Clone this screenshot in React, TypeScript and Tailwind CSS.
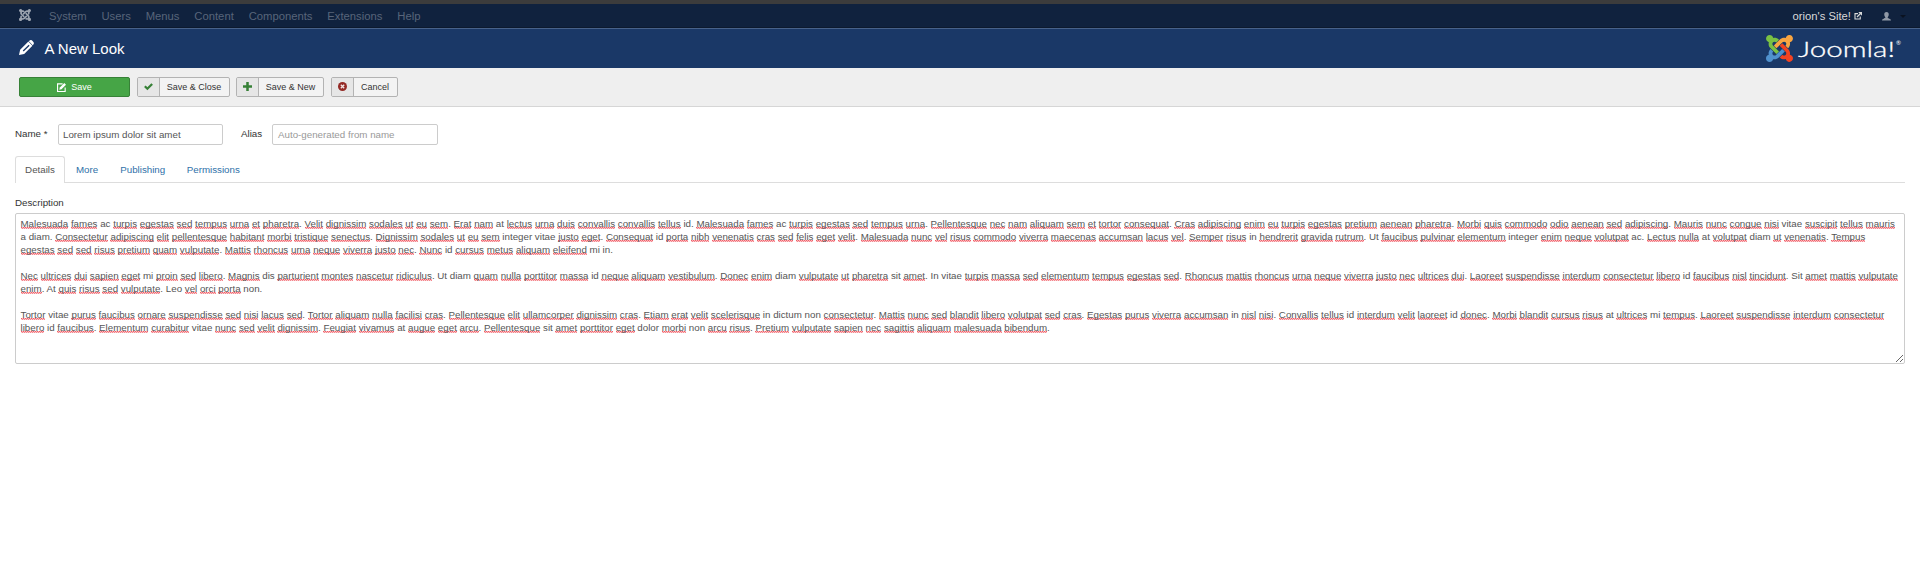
import React from "react";

const lines = [
  "*Malesuada *fames ac *turpis *egestas *sed *tempus *urna *et *pharetra. *Velit *dignissim *sodales *ut *eu *sem. *Erat *nam at *lectus *urna *duis *convallis *convallis *tellus id. *Malesuada *fames ac *turpis *egestas *sed *tempus *urna. *Pellentesque *nec *nam *aliquam *sem *et *tortor *consequat. *Cras *adipiscing *enim *eu *turpis *egestas *pretium *aenean *pharetra. *Morbi *quis *commodo *odio *aenean *sed *adipiscing. *Mauris *nunc *congue *nisi vitae *suscipit *tellus *mauris",
  "a diam. *Consectetur *adipiscing *elit *pellentesque *habitant *morbi *tristique *senectus. *Dignissim *sodales *ut *eu *sem integer vitae *justo *eget. *Consequat id *porta *nibh *venenatis *cras *sed *felis *eget *velit. *Malesuada *nunc *vel *risus *commodo *viverra *maecenas *accumsan *lacus *vel. *Semper *risus in *hendrerit *gravida *rutrum. Ut *faucibus *pulvinar *elementum integer *enim *neque *volutpat ac. *Lectus *nulla at *volutpat diam *ut *venenatis. *Tempus",
  "*egestas *sed *sed *risus *pretium *quam *vulputate. *Mattis *rhoncus *urna *neque *viverra *justo *nec. *Nunc id *cursus *metus *aliquam *eleifend mi in.",
  "",
  "*Nec *ultrices *dui *sapien *eget mi *proin *sed *libero. *Magnis dis *parturient *montes *nascetur *ridiculus. Ut diam *quam *nulla *porttitor *massa id *neque *aliquam *vestibulum. *Donec *enim diam *vulputate *ut *pharetra sit *amet. In vitae *turpis *massa *sed *elementum *tempus *egestas *sed. *Rhoncus *mattis *rhoncus *urna *neque *viverra *justo *nec *ultrices *dui. *Laoreet *suspendisse *interdum *consectetur *libero id *faucibus *nisl *tincidunt. Sit *amet *mattis *vulputate",
  "*enim. At *quis *risus *sed *vulputate. Leo *vel *orci *porta non.",
  "",
  "*Tortor vitae *purus *faucibus *ornare *suspendisse *sed *nisi *lacus *sed. *Tortor *aliquam *nulla *facilisi *cras. *Pellentesque *elit *ullamcorper *dignissim *cras. *Etiam *erat *velit *scelerisque in dictum non *consectetur. *Mattis *nunc *sed *blandit *libero *volutpat *sed *cras. *Egestas *purus *viverra *accumsan in *nisl *nisi. *Convallis *tellus id *interdum *velit *laoreet id *donec. *Morbi *blandit *cursus *risus at *ultrices mi *tempus. *Laoreet *suspendisse *interdum *consectetur",
  "*libero id *faucibus. *Elementum *curabitur vitae *nunc *sed *velit *dignissim. *Feugiat *vivamus at *augue *eget *arcu. *Pellentesque sit *amet *porttitor *eget dolor *morbi non *arcu *risus. *Pretium *vulputate *sapien *nec *sagittis *aliquam *malesuada *bibendum.",
];

// A leading asterisk marks a word flagged by the spell checker.
function Word({ token }: { token: string }) {
  const m = token.match(/^\*([a-z]+)(.*)$/i);
  if (!m) return <>{token}</>;
  return (
    <>
      <span className="bg-[linear-gradient(90deg,#f0606a_50%,#f9b5b9_50%),linear-gradient(90deg,#fbd0d2_50%,#f4868d_50%)] bg-[length:2px_1px,2px_1px] bg-[position:0_9px,0_10px] bg-repeat-x">{m[1]}</span>
      {m[2]}
    </>
  );
}

function Line({ text }: { text: string }) {
  return (
    <div className="h-[13px] whitespace-nowrap leading-[13px] [word-spacing:-0.008px]">
      {text.split(" ").map((t, i) => (
        <React.Fragment key={i}>
          {i > 0 ? " " : ""}
          <Word token={t} />
        </React.Fragment>
      ))}
    </div>
  );
}

const markPaths = [
  "M.6 92.1C.6 58.8 27.4 32 60.4 32c30 0 54.5 21.9 59.2 50.2 32.6-7.6 67.1.6 96.5 30l-44.3 44.3c-20.5-20.5-42.6-16.3-55.4-3.5-14.3 14.3-14.3 37.9 0 52.2l99.5 99.5-44 44.3c-87.700-87.200-49.700-49.700-99.800-99.700-26.800-26.500-35-64.800-24.800-98.900C20.400 144.600.6 120.700.6 92.100z",
  "M130.1 208.5l44.3 44.3c10-10 89.700-89.700 99.700-99.800 14.300-14.300 37.600-14.300 51.900 0 12.800 12.800 17 35-3.500 55.400l44 44.300c31.200-31.200 38.500-67.600 28.900-101.200 29.200-4.100 51.900-29.200 51.900-59.500 0-33.200-26.800-60.100-59.800-60.100-30.300 0-55.400 22.500-59.500 51.600-33.800-9.900-71.700-1.500-98.300 25.100-18.300 19.100-71.100 71.500-99.600 99.900z",
  "M396.4 360.7c8.200-32.700-.9-68.500-26.300-93.900-11.800-12.200 5 4.700-99.500-99.700l-44.300 44.300 99.700 99.700c14.300 14.300 14.300 37.600 0 51.900-12.800 12.800-35 17-55.400-3.500l-44 44.300c27.600 30.200 68 38.800 102.700 28 5.500 27.400 29.700 48.100 58.900 48.100 33 0 59.800-26.800 59.800-60.100 0-30.200-22.500-55-51.600-59.100z",
  "M312.1 307.6l-44-44.3c-87 86.400-50.400 50.400-99.700 99.800-14.300 14.300-37.600 14.300-51.900 0-13.100-13.400-16.900-35.300 3.200-55.400l-44-44.300c-30.200 30.200-38 65.200-29.500 98.300-26.700 6-46.200 29.900-46.200 58.200C0 453.200 26.800 480 59.800 480c28.600 0 52.500-19.800 58.600-46.700 32.700 8.200 68.500-.6 94.200-26 32.100-32 12.200-12.400 99.500-99.700z",
];

function JoomlaMark({ colors, className }: { colors: string[]; className: string }) {
  return (
    <svg viewBox="0 32 448 448" className={className}>
      {markPaths.map((d, i) => (
        <path key={i} d={d} fill={colors[i]} />
      ))}
    </svg>
  );
}

function ExternalIcon({ className }: { className: string }) {
  return (
    <svg viewBox="0 0 16 16" className={className} fill="none" stroke="currentColor" strokeWidth="2.2">
      <path d="M8 3.200H2V14h10.500V9" />
      <path d="M6 10l7-7" strokeWidth="2.6" />
      <path d="M8.500 0H16v7.500z" fill="currentColor" stroke="none" />
    </svg>
  );
}

function EditIcon() {
  return (
    <svg viewBox="0 0 16 16" className="h-[9px] w-[9px]" fill="none" stroke="currentColor" strokeWidth="2">
      <path d="M10 1.500H1V15h13.500V8" />
      <path d="M4 12l1-4L13 0l3 3-8 8z" fill="currentColor" stroke="none" />
    </svg>
  );
}

function ToolButton({ label, icon, className }: { label: string; icon: React.ReactNode; className: string }) {
  return (
    <button className={`flex h-5 items-stretch overflow-hidden rounded-[2px] border border-[#b3b3b3] bg-[#f3f3f3] text-[9px] text-[#333] ${className}`}>
      <span className="flex w-[22px] items-center justify-center border-r border-[#b3b3b3] bg-[#e6e6e6] pb-px">{icon}</span>
      <span className="flex-1 pr-px text-center leading-[18px]">{label}</span>
    </button>
  );
}

const menu = ["System", "Users", "Menus", "Content", "Components", "Extensions", "Help"];
const gray = ["#9ba3af", "#9ba3af", "#9ba3af", "#9ba3af"];

export default function App() {
  return (
    <div className="h-[587px] w-full overflow-hidden bg-white font-['Liberation_Sans',Arial,sans-serif] text-[9.75px] leading-[13px] text-[#333]">
      <div className="h-1 bg-[#3c3c3c]" />
      <nav className="flex h-6 items-center border-b border-[#0d1a2e] bg-[#10223e] pl-[19px] text-[11.25px] text-[#58657a]">
        <JoomlaMark className="mb-px h-3 w-3" colors={gray} />
        <ul className="ml-[18px] flex gap-[14.9px] pt-px">
          {menu.map((m) => (
            <li key={m}>{m}</li>
          ))}
        </ul>
        <div className="ml-auto flex items-center pt-px text-[#d9d9d9]">
          orion's Site!
          <ExternalIcon className="ml-[3px] h-2 w-2" />
          <svg viewBox="0 0 16 16" className="ml-5 h-[9px] w-[9px] text-[#9099a6]" fill="currentColor">
            <path d="M8 0c3 0 4 2 4 4.500S10.500 9 10 10c0 1 6 1.500 6 5H0c0-3.500 6-4 6-5C5.500 9 4 7 4 4.500S5 0 8 0z" />
          </svg>
          <span className="ml-[9px] mr-[14px] border-x-[3px] border-t-[3px] border-x-transparent border-t-[#0a1220]" />
        </div>
      </nav>
      <header className="flex h-10 items-center border-t border-[#48628a] bg-[#1a3867] pl-[19px] text-white">
        <svg viewBox="0 0 16 16" className="mb-[2px] h-[15px] w-[15px]" fill="currentColor">
          <path fillRule="evenodd" d="M0 16l1.200-5.500L10 1.700 14.300 6 5.500 14.800zM4 11.300l1 1L11.300 6l-1-1z" />
          <path d="M11 .9c1-1.200 2.500-1 3.700.3 1.400 1.300 1.600 2.700.4 3.800l-.5.500L10.500 1.400z" />
        </svg>
        <h1 className="ml-[10.5px] text-[15px] leading-5">A New Look</h1>
        <div className="ml-auto mr-[17px] flex items-center">
          <JoomlaMark className="h-[27px] w-[27px]" colors={["#7ac143", "#f9a541", "#f44321", "#5091cd"]} />
          <svg className="ml-1 h-7 w-[106px] font-['Lato',sans-serif]" viewBox="0 0 106 28" fill="#fff">
            <text x="1" y="21.500" fontSize="22" fontWeight="300" stroke="#fff" strokeWidth="0.300" textLength="97" lengthAdjust="spacingAndGlyphs">Joomla!</text>
            <text x="99" y="9.500" fontSize="6">®</text>
          </svg>
        </div>
      </header>
      <div className="flex h-[39px] items-start border-b border-[#d6d6d6] bg-[#efefef] pl-[19px] pt-[9px]">
        <button className="flex h-5 w-[111px] items-center justify-center gap-[5px] rounded-[2px] border border-[#378137] bg-[#46a546] text-[9px] text-white">
          <EditIcon />
          Save
        </button>
        <ToolButton
          className="ml-[7px] w-[93px]"
          label="Save & Close"
          icon={<svg viewBox="0 0 16 16" className="h-[9px] w-[9px]" fill="none" stroke="#378137" strokeWidth="4"><path d="M1.500 7.500l4.500 4.500L14.500 3.500" /></svg>}
        />
        <ToolButton
          className="ml-[6px] w-[88px]"
          label="Save & New"
          icon={<svg viewBox="0 0 16 16" className="h-[9px] w-[9px]" stroke="#378137" strokeWidth="4.500"><path d="M0 8h16M8 0v16" /></svg>}
        />
        <ToolButton
          className="ml-[7px] w-[67px]"
          label="Cancel"
          icon={<svg viewBox="0 0 16 16" className="h-[9px] w-[9px]" stroke="#f3e4e4" strokeWidth="2.400"><circle cx="8" cy="8" r="8" fill="#942a25" stroke="none" /><path d="M5 5l6 6M11 5l-6 6" /></svg>}
        />
      </div>
      <main className="px-[15px] pt-[17px]">
        <div className="flex h-[21px] items-start">
          <label className="w-[43px] pt-[3px]">Name *</label>
          <div className="h-[21px] w-[165px] rounded-[2px] border border-[#ccc] pl-[4px] pt-[3px] leading-[13px] text-[#555]">Lorem ipsum dolor sit amet</div>
          <label className="ml-[18px] w-[31px] pt-[3px]">Alias</label>
          <div className="h-[21px] w-[166px] rounded-[2px] border border-[#ccc] pl-[5px] pt-[3px] leading-[13px] text-[#999]">Auto-generated from name</div>
        </div>
        <div className="mt-[11px] flex h-[27px] border-b border-[#ddd] text-[#3071a9]">
          <div className="h-[27px] w-[50px] rounded-t-[3px] border border-b-0 border-[#ddd] bg-white pt-[6px] text-center text-[#555]">Details</div>
          <div className="ml-[11px] pt-[7px]">More</div>
          <div className="ml-[22px] pt-[7px]">Publishing</div>
          <div className="ml-[21.5px] pt-[7px]">Permissions</div>
        </div>
        <div className="mt-[13px]">Description</div>
        <div className="mt-[4px] h-[151px] resize-y overflow-hidden rounded-[2px] border border-[#ccc] pl-[4.5px] pt-[3px] text-[#555]">
          {lines.map((l, i) => (
            <Line key={i} text={l} />
          ))}
        </div>
      </main>
    </div>
  );
}
